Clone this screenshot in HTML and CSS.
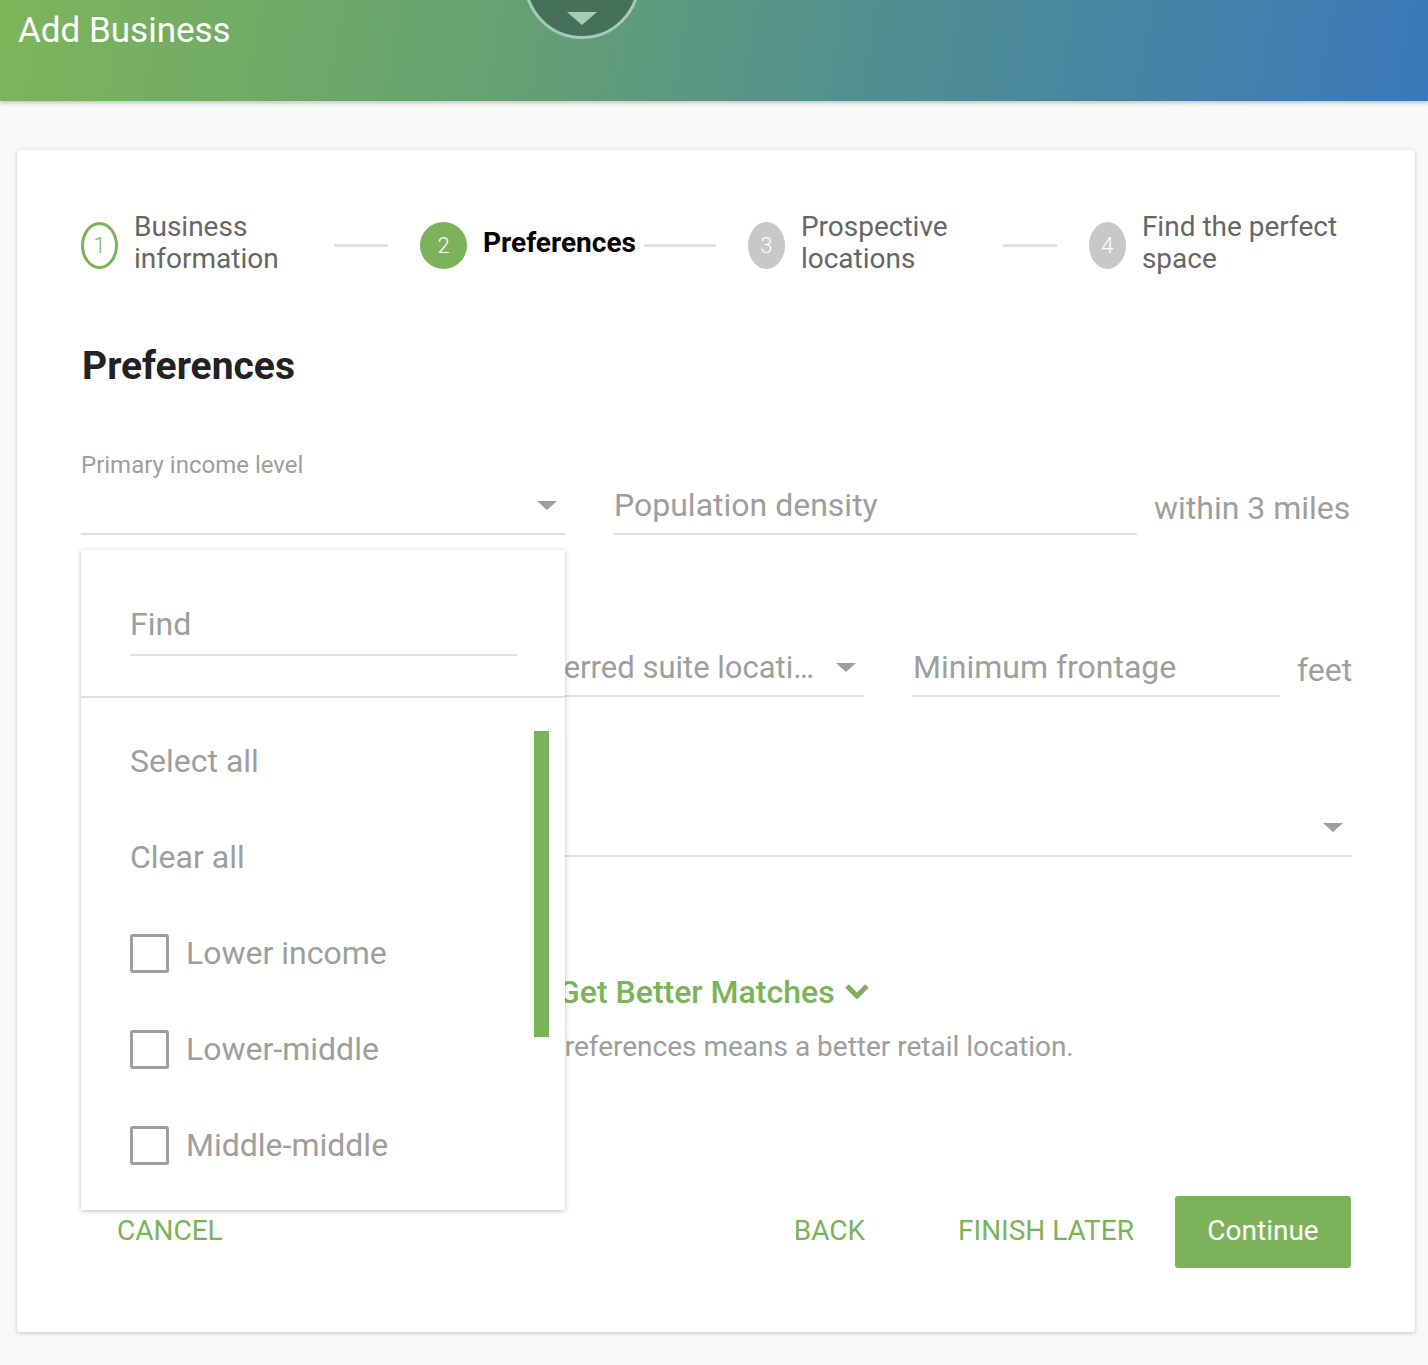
FILE: index.html
```html
<!DOCTYPE html>
<html>
<head>
<meta charset="utf-8">
<link rel="stylesheet" href="styles.css">
</head>
<body>
<header class="topbar">
  <h1 class="topbar-title">Add Business</h1>
  <div class="topbar-toggle"><span class="toggle-arrow"></span></div>
</header>
<main class="page">
  <section class="card">
    <div class="stepper">
      <div class="step step-done">
        <span class="step-num">1</span>
        <span class="step-label step-label-fixed">Business information</span>
      </div>
      <span class="conn"></span>
      <div class="step step-active">
        <span class="step-num">2</span>
        <span class="step-label">Preferences</span>
      </div>
      <span class="conn conn-wide"></span>
      <div class="step">
        <span class="step-num">3</span>
        <span class="step-label step-label-mid">Prospective locations</span>
      </div>
      <span class="conn"></span>
      <div class="step">
        <span class="step-num">4</span>
        <span class="step-label step-label-last">Find the perfect space</span>
      </div>
    </div>

    <h2 class="section-title">Preferences</h2>

    <div class="row row-first">
      <div class="field select-field income-field">
        <label class="field-label">Primary income level</label>
        <div class="field-box"><span class="field-text"></span><span class="caret"></span></div>
        <div class="dropdown">
          <div class="dropdown-search">
            <div class="search-box">Find</div>
          </div>
          <ul class="dropdown-list">
            <li class="dd-item">Select all</li>
            <li class="dd-item">Clear all</li>
            <li class="dd-item"><span class="checkbox"></span>Lower income</li>
            <li class="dd-item"><span class="checkbox"></span>Lower-middle</li>
            <li class="dd-item"><span class="checkbox"></span>Middle-middle</li>
            <li class="dd-item"><span class="checkbox"></span>Upper-middle</li>
          </ul>
          <span class="dd-scroll"></span>
        </div>
      </div>
      <div class="field input-field density-field">
        <div class="field-box"><span class="field-text">Population density</span></div>
      </div>
      <span class="suffix">within 3 miles</span>
    </div>

    <div class="row row-second">
      <div class="field select-field type-field">
        <div class="field-box"><span class="field-text">Property type</span><span class="caret"></span></div>
      </div>
      <div class="field select-field suite-field">
        <div class="field-box"><span class="field-text field-text-sm ellipsis">Preferred suite location</span><span class="caret"></span></div>
      </div>
      <div class="field input-field frontage-field">
        <div class="field-box"><span class="field-text">Minimum frontage</span></div>
      </div>
      <span class="suffix">feet</span>
    </div>

    <div class="row">
      <div class="field select-field full-field">
        <div class="field-box"><span class="field-text">Nearby businesses</span><span class="caret"></span></div>
      </div>
    </div>

    <div class="matches">
      <div class="matches-title">Get Better Matches
        <svg class="chev" width="26" height="18" viewBox="0 0 26 18"><path d="M3 3 L13 13 L23 3" fill="none" stroke="#7cb35a" stroke-width="5"/></svg>
      </div>
      <p class="matches-desc">Preferences means a better retail location.</p>
    </div>

    <div class="footer">
      <button class="btn-text btn-cancel">CANCEL</button>
      <span class="footer-spacer"></span>
      <button class="btn-text btn-back">BACK</button>
      <button class="btn-text btn-later">FINISH LATER</button>
      <button class="btn-primary">Continue</button>
    </div>
  </section>
</main>
</body>
</html>
```
FILE: styles.css
```css
* { box-sizing: border-box; }
html, body { margin: 0; padding: 0; }
body {
  background: #f8f8f6;
  font-family: Roboto, "Liberation Sans", sans-serif;
  color: #9e9e9e;
  width: 1428px;
  height: 1365px;
  overflow: hidden;
}
.topbar {
  position: relative;
  height: 101px;
  background: linear-gradient(100deg, #7db55a 0%, #66a172 35%, #51908f 60%, #3b78bb 100%);
  box-shadow: 0 2px 4px rgba(0,0,0,0.22);
  z-index: 2;
}
.topbar-title {
  margin: 0;
  padding: 10px 0 0 18px;
  font-size: 35px;
  line-height: 42px;
  font-weight: 400;
  color: #fff;
}
.topbar-toggle {
  position: absolute;
  left: 524px;
  top: -77px;
  width: 116px;
  height: 116px;
  border-radius: 50%;
  background: #45715a;
  border: 3px solid #a6cbb6;
}
.toggle-arrow {
  position: absolute;
  left: 40px;
  bottom: 11px;
  width: 0; height: 0;
  border-left: 15px solid transparent;
  border-right: 15px solid transparent;
  border-top: 13px solid #a6cbb6;
}
.page {
  padding: 49px 13px 0 17px;
}
.card {
  position: relative;
  background: #fff;
  border-radius: 3px;
  box-shadow: 0 1px 4px rgba(0,0,0,0.2);
  padding: 63px 64px 64px;
  height: 1182px;
}
/* stepper */
.stepper {
  display: flex;
  align-items: center;
  height: 64px;
}
.step { display: flex; align-items: center; }
.step-num {
  flex: none;
  width: 37px;
  height: 47px;
  border-radius: 50%;
  background: #c8c8c8;
  color: #fff;
  font-size: 22px;
  font-weight: 300;
  display: flex;
  align-items: center;
  justify-content: center;
  margin-right: 16px;
}
.step-done .step-num {
  background: #fff;
  border: 3px solid #7cb35a;
  color: #7cb35a;
}
.step-active .step-num {
  width: 47px;
  background: #7cb35a;
}
.step-label {
  font-size: 28px;
  line-height: 32px;
  padding-bottom: 4px;
  color: #666;
}
.step-active .step-label { color: #000; font-weight: 700; }
.step-label-fixed { width: 192px; }
.step-label-mid { width: 194px; }
.step-label-last { width: 210px; }
.conn {
  flex: none;
  width: 54px;
  height: 3px;
  background: #e0e0e0;
  margin: 0 32px 0 8px;
}
.conn-wide { width: 72px; }

.section-title {
  margin: 67px 0 0 1px;
  font-size: 39px;
  line-height: 44px;
  font-weight: 700;
  color: #222;
}
/* fields */
.row {
  display: flex;
  align-items: flex-end;
  margin-top: 104px;
}
.row-first { margin-top: 63px; }
.row-second { margin-top: 106px; }
.field { position: relative; flex: none; }
.field-label {
  display: block;
  font-size: 24px;
  line-height: 28px;
  color: #9e9e9e;
}
.field-box {
  display: flex;
  align-items: center;
  height: 56px;
  border-bottom: 2px solid #e0e0e0;
  padding-bottom: 2px;
}
.field-text {
  flex: 1;
  min-width: 0;
  font-size: 32px;
  color: #9e9e9e;
  white-space: nowrap;
}
.field-text-sm { font-size: 31px; }
.ellipsis { overflow: hidden; text-overflow: ellipsis; }
.caret {
  flex: none;
  width: 0; height: 0;
  border-left: 10px solid transparent;
  border-right: 10px solid transparent;
  border-top: 9px solid #9e9e9e;
  margin: 0 8px 0 16px;
}
.income-field { width: 484px; }
.density-field { width: 523px; margin-left: 49px; }
.type-field { width: 377px; }
.suite-field { width: 357px; margin-left: 49px; }
.frontage-field { width: 367px; margin-left: 49px; }
.full-field { width: 1270px; }
.suffix {
  font-size: 32px;
  line-height: 40px;
  margin: 0 0 7px 17px;
  color: #9e9e9e;
  white-space: nowrap;
}
/* dropdown */
.dropdown {
  position: absolute;
  left: 0;
  top: 100%;
  margin-top: 15px;
  width: 484px;
  height: 660px;
  background: #fff;
  box-shadow: 0 1px 5px rgba(0,0,0,0.25);
  overflow: hidden;
  z-index: 5;
}
.dropdown-search {
  padding: 46px 48px 40px 49px;
  border-bottom: 2px solid #e0e0e0;
}
.search-box {
  height: 60px;
  border-bottom: 2px solid #e0e0e0;
  font-size: 32px;
  line-height: 56px;
  color: #9e9e9e;
}
.dropdown-list {
  list-style: none;
  margin: 0;
  padding: 15px 0 0 49px;
}
.dd-item {
  display: flex;
  align-items: center;
  height: 96px;
  font-size: 32px;
  color: #9e9e9e;
}
.checkbox {
  flex: none;
  width: 39px;
  height: 39px;
  border: 3px solid #9e9e9e;
  border-radius: 3px;
  margin-right: 17px;
}
.dd-scroll {
  position: absolute;
  right: 16px;
  top: 181px;
  width: 15px;
  height: 306px;
  background: #7cb35a;
}
/* matches */
.matches { margin: 117px 0 0 466px; }
.matches-title {
  padding-left: 11px;
  font-size: 32px;
  line-height: 36px;
  font-weight: 500;
  color: #7cb35a;
  display: flex;
  align-items: center;
}
.chev { margin-left: 9px; }
.matches-desc {
  margin: 21px 0 0;
  font-size: 28px;
  line-height: 32px;
  color: #9e9e9e;
}
/* footer */
.footer {
  display: flex;
  align-items: center;
  margin-top: 133px;
  height: 72px;
}
.footer-spacer { flex: 1; }
button {
  font-family: inherit;
  border: none;
  background: none;
  cursor: pointer;
  padding: 0;
}
.btn-text {
  font-size: 28px;
  color: #7cb35a;
  padding-bottom: 4px;
}
.btn-cancel { margin-left: 36px; }
.btn-back { margin-right: 93px; }
.btn-later { margin-right: 41px; }
.btn-primary {
  width: 176px;
  height: 72px;
  background: #7cb35a;
  color: #fff;
  font-size: 28px;
  padding-bottom: 4px;
  border-radius: 3px;
}
```
